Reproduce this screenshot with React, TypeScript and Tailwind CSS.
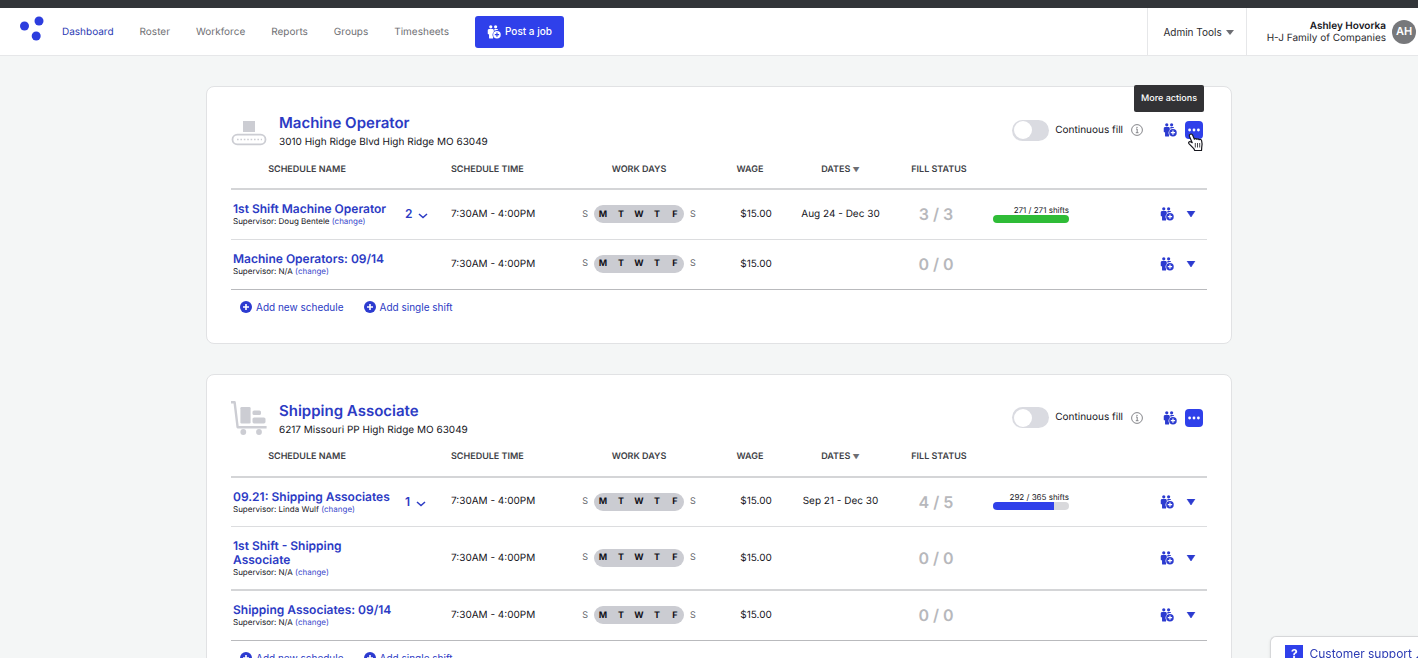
import React from "react";

type Schedule = {
  name: string;
  supervisor: string;
  count?: number;
  dates?: string;
  fill: string;
  progress?: { done: number; total: number };
  heavy?: boolean;
};

type Job = {
  id: string;
  title: string;
  address: string;
  icon: React.ReactNode;
  tooltip?: boolean;
  schedules: Schedule[];
};

const DAYS = ["M", "T", "W", "T", "F"];
const NAV = ["Dashboard", "Roster", "Workforce", "Reports", "Groups", "Timesheets"];

function PeopleIcon({ className, plus }: { className: string; plus: string }) {
  return (
    <svg viewBox="0 0 26 26" className={className} fill="currentColor" aria-hidden="true">
      <circle cx="7" cy="3.4" r="3" />
      <circle cx="16" cy="3.4" r="3" />
      <path d="M4.2 7.6h5.8c1.6 0 2.6 1 2.6 2.6v2.6c-1.6 1.4-2.4 3.2-2.4 5.4 0 1.6.4 3 1.2 4.2v1.2a1.6 1.6 0 0 1-1.6 1.6h-4.400a1.600 1.600 0 0 1-1.600-1.600v-6.400H3a1.600 1.600 0 0 1-1.600-1.600v-5.400c0-1.600 1.200-2.600 2.800-2.600z" />
      <path d="M14.200 7.600h4c1.400 0 2.300.8 2.500 2.100-2.600-.5-4.800 0-6.700 1.300 0-1.500 0-2.400-.6-3.300z" />
      <circle cx="18.500" cy="18" r="7" />
      <path d="M18.500 14v8M14.500 18h8" stroke={plus} strokeWidth="2.200" fill="none" />
    </svg>
  );
}

function ConveyorIcon() {
  return (
    <svg viewBox="0 -3 36 36" className="size-9 shrink-0" aria-hidden="true">
      <rect x="12" y="5" width="12" height="11" fill="#cccdd3" />
      <rect x="1.500" y="18.700" width="33" height="9.600" rx="4.800" fill="#fff" stroke="#cccdd3" strokeWidth="1.800" />
      <path d="M6 23.500h25" stroke="#cccdd3" strokeWidth="1.600" strokeDasharray="1.600 1.800" />
    </svg>
  );
}

function CartIcon() {
  return (
    <svg viewBox="0 2 36 36" className="size-9 shrink-0" fill="#cccdd3" aria-hidden="true">
      <path d="M0 3.200h3.600l3 25h29" fill="none" stroke="#cccdd3" strokeWidth="2.400" strokeLinejoin="round" />
      <rect x="9.400" y="8" width="10.200" height="16.400" rx="1.200" />
      <rect x="21.500" y="11.500" width="8.500" height="4.600" rx="1.600" />
      <rect x="21.500" y="18.400" width="13" height="6" rx="1.600" />
      <circle cx="12.300" cy="33" r="2.900" />
      <circle cx="28" cy="33" r="2.900" />
    </svg>
  );
}

function PlusCircle() {
  return (
    <svg viewBox="0 0 12 12" className="size-3" aria-hidden="true">
      <circle cx="6" cy="6" r="6" fill="#2c3bd0" />
      <path d="M6 3v6M3 6h6" stroke="#fff" strokeWidth="1.600" />
    </svg>
  );
}

function Pointer() {
  return (
    <svg viewBox="0 0 17 19" className="pointer-events-none absolute top-3 left-0.5 z-10 h-[19px] w-[17px]" aria-hidden="true">
      <path
        d="M3.300 1.200c1-.5 2 .1 2.400 1l1.700 4c.6-.8 1.900-.8 2.400.1.700-.7 1.900-.6 2.300.4 1-.6 2.200-.1 2.500 1 .6 2.300.8 4.700.1 7l-.2 2.800H7.700l-.9-1.900-4.900-5c-.8-1 .2-2.300 1.500-1.900l1.800 1L2.400 3.200c-.3-.8 0-1.600.9-2z"
        fill="#fff"
        stroke="#15151c"
        strokeWidth="1.200"
        strokeLinejoin="round"
      />
      <path d="M8.300 10v4.500M10.500 10v4.500M12.700 10v4.500" stroke="#15151c" strokeWidth=".8" />
    </svg>
  );
}

const JOBS: Job[] = [
  {
    id: "machine-operator",
    title: "Machine Operator",
    address: "3010 High Ridge Blvd High Ridge MO 63049",
    icon: <ConveyorIcon />,
    tooltip: true,
    schedules: [
      { name: "1st Shift Machine Operator", supervisor: "Doug Bentele", count: 2, dates: "Aug 24 - Dec 30", fill: "3 / 3", progress: { done: 271, total: 271 } },
      { name: "Machine Operators: 09/14", supervisor: "N/A", fill: "0 / 0" },
    ],
  },
  {
    id: "shipping-associate",
    title: "Shipping Associate",
    address: "6217 Missouri PP High Ridge MO 63049",
    icon: <CartIcon />,
    schedules: [
      { name: "09.21: Shipping Associates", supervisor: "Linda Wulf", count: 1, dates: "Sep 21 - Dec 30", fill: "4 / 5", progress: { done: 292, total: 365 } },
      { name: "1st Shift - Shipping Associate", supervisor: "N/A", fill: "0 / 0", heavy: true },
      { name: "Shipping Associates: 09/14", supervisor: "N/A", fill: "0 / 0" },
    ],
  },
];

function Progress({ done, total }: { done: number; total: number }) {
  const complete = done >= total;
  return (
    <div className="ml-[13px] w-[76px]">
      <div className="text-right text-[8px] leading-[9px] whitespace-nowrap text-[#15151c]">
        {done} / {total} shifts
      </div>
      <div className="h-2 overflow-hidden rounded-full bg-[#d9d9dc]">
        <div className={complete ? "h-full bg-[#2fbc37]" : "h-full bg-[#2f40ea]"} style={{ width: `${(done / total) * 100}%` }} />
      </div>
    </div>
  );
}

function ScheduleRow({ s, last }: { s: Schedule; last: boolean }) {
  const border = s.heavy ? "border-b-2 border-[#d4d5d7]" : last ? "border-b border-[#b9babd]" : "border-b border-[#dcdddf]";
  return (
    <tr className={`h-[50px] ${border}`}>
      <td className="py-3 pl-0.5 text-left">
        <a href="#schedule" className="block text-[12px] leading-[14px] font-semibold text-[#2c3bc4]">
          {s.name}
        </a>
        <div className="text-[8px] leading-[10px] text-[#15151c]">
          Supervisor: {s.supervisor}{" "}
          <a href="#change" className="text-[#3a49cc]">
            (change)
          </a>
        </div>
      </td>
      <td className="pl-2.5">
        {s.count !== undefined && (
          <button type="button" className="flex items-center gap-1.5 text-[12px] font-semibold text-[#2c3bc4]">
            {s.count}
            <svg viewBox="0 0 10 6" className="mt-1 h-1.5 w-2.5" fill="none" aria-hidden="true">
              <path d="M1 1l4 3.600L9 1" stroke="currentColor" strokeWidth="1.500" />
            </svg>
          </button>
        )}
      </td>
      <td className="pl-0.5 whitespace-nowrap">7:30AM - 4:00PM</td>
      <td>
        <div className="flex items-center justify-center gap-1.5 text-[9px]">
          <span className="text-[#66676c]">S</span>
          <span className="flex h-[18px] w-[90px] items-center rounded-full bg-[#cbccd2] font-bold text-[#101018]">
            {DAYS.map((d, i) => (
              <span key={i} className="flex-1 text-center">
                {d}
              </span>
            ))}
          </span>
          <span className="text-[#66676c]">S</span>
        </div>
      </td>
      <td className="pl-3 text-center">$15.00</td>
      <td className="text-center whitespace-nowrap">{s.dates}</td>
      <td className="text-center text-base font-semibold text-[#b7b8bc]">{s.fill}</td>
      <td>{s.progress && <Progress {...s.progress} />}</td>
      <td>
        <div className="flex items-center justify-end gap-3 pr-[11px] text-[#2c3bd0]">
          <button type="button" aria-label="Add workers">
            <PeopleIcon className="size-3.5" plus="#fff" />
          </button>
          <button type="button" aria-label="Schedule options">
            <svg viewBox="0 0 10 6" className="h-1.5 w-2.5" fill="currentColor" aria-hidden="true">
              <path d="M1 0h8L5 6z" stroke="currentColor" strokeWidth=".6" />
            </svg>
          </button>
        </div>
      </td>
    </tr>
  );
}

function JobCard({ job }: { job: Job }) {
  return (
    <section className="rounded-lg border border-[#e1e2e4] bg-white px-6 pt-[26px] pb-7">
      <div className="flex justify-between">
        <div className="flex items-start gap-3">
          {job.icon}
          <div>
            <h2 className="text-[15px] leading-[19px] font-semibold text-[#2c3bc4]">{job.title}</h2>
            <p className="text-[10px] leading-[21px] text-[#15151c]">{job.address}</p>
          </div>
        </div>
        <div className="mt-[7px] mr-1 flex h-5 items-center">
          <label htmlFor={job.id} className="flex cursor-pointer items-center gap-1.5 text-[10px] text-[#15151c]">
            <input id={job.id} type="checkbox" className="peer sr-only" />
            <span className="flex h-[21px] w-[37px] items-center rounded-full bg-[#dadbe1] px-0.5 peer-checked:justify-end peer-checked:bg-[#2f40ea]">
              <span className="size-[18px] rounded-full bg-white" />
            </span>
            Continuous fill
          </label>
          <svg viewBox="0 0 12 12" className="ml-2 size-3" fill="none" stroke="#77787d" aria-hidden="true">
            <circle cx="6" cy="6" r="5.400" strokeWidth=".9" />
            <path d="M5 5h1.200v3.600M4.800 8.700h2.700" strokeWidth=".9" />
            <circle cx="6" cy="3.300" r=".4" fill="#77787d" strokeWidth=".5" />
          </svg>
          <button type="button" aria-label="Add workers" className="ml-5 text-[#2c3bd0]">
            <PeopleIcon className="size-3.5" plus="#fff" />
          </button>
          <div className="relative ml-2">
            <button type="button" aria-label="More actions" className="flex size-[18px] items-center justify-center rounded bg-[#2f40ea]">
              <svg viewBox="0 0 12 4" className="h-1 w-3" fill="#fff" aria-hidden="true">
                <circle cx="1.600" cy="2" r="1.400" />
                <circle cx="6" cy="2" r="1.400" />
                <circle cx="10.400" cy="2" r="1.400" />
              </svg>
            </button>
            {job.tooltip && (
              <>
                <Pointer />
                <div role="tooltip" className="absolute -right-px bottom-[27px] rounded-xs bg-[#323235] px-[7px] text-[9px] leading-[27px] font-medium whitespace-nowrap text-white">
                  More actions
                </div>
              </>
            )}
          </div>
        </div>
      </div>
      <table className="w-full table-fixed border-collapse text-[10px] text-[#15151c]">
        <colgroup>
          <col className="w-[164px]" />
          <col className="w-[54px]" />
          <col className="w-[118px]" />
          <col className="w-[144px]" />
          <col className="w-[78px]" />
          <col className="w-[103px]" />
          <col className="w-[88px]" />
          <col className="w-[103px]" />
          <col />
        </colgroup>
        <thead>
          <tr className="h-9 border-b-2 border-[#d4d5d7] text-[9px] text-[#3e3f46] uppercase [&>th]:pb-0.5 [&>th]:font-semibold">
            <th className="pr-3">Schedule name</th>
            <th />
            <th className="pl-0.5 text-left">Schedule time</th>
            <th>Work days</th>
            <th>Wage</th>
            <th>
              Dates <span className="text-[7px] text-[#6d6e73]">▼</span>
            </th>
            <th className="pl-1.5">Fill status</th>
            <th />
            <th />
          </tr>
        </thead>
        <tbody>
          {job.schedules.map((s, i) => (
            <ScheduleRow key={s.name} s={s} last={i === job.schedules.length - 1} />
          ))}
        </tbody>
      </table>
      <div className="mt-[9px] flex gap-5 pl-[9px] text-[10px] leading-4 text-[#2c3bc4]">
        {["Add new schedule", "Add single shift"].map((t) => (
          <button key={t} type="button" className="flex items-center gap-1">
            <PlusCircle />
            {t}
          </button>
        ))}
      </div>
    </section>
  );
}

export default function App() {
  return (
    <div className="flex h-screen flex-col overflow-hidden bg-[#f4f6f6] font-['Inter',sans-serif] text-[#15151c] [text-rendering:geometricPrecision]">
      <div className="h-2 shrink-0 bg-[#323539]" />
      <header className="flex h-12 shrink-0 items-stretch border-b border-[#e6e7e9] bg-white">
        <a href="#home" aria-label="Home" className="mt-2 ml-5">
          <svg viewBox="0 0 24 25" className="h-[25px] w-6" fill="#2c3dde" aria-hidden="true">
            <circle cx="4.500" cy="10" r="4.500" />
            <circle cx="19" cy="5" r="4.500" />
            <circle cx="16.200" cy="20" r="4.500" />
          </svg>
        </a>
        <nav className="ml-[18px] flex items-center gap-[26px] text-[10px]">
          {NAV.map((n, i) => (
            <a key={n} href={`#${n.toLowerCase()}`} className={i === 0 ? "pt-0.5 text-[#2c3bb4]" : "pt-0.5 text-[#6f7074]"}>
              {n}
            </a>
          ))}
          <button type="button" className="flex h-8 items-center gap-1 rounded-[3px] bg-[#2f40ea] px-3 font-medium text-white">
            <PeopleIcon className="size-3.5" plus="#2f40ea" />
            Post a job
          </button>
        </nav>
        <div className="ml-auto flex items-stretch text-[10px]">
          <button type="button" className="flex items-center gap-1 border-x border-[#e6e7e9] px-3 pt-0.5 pl-[15px] text-[#2b2b30]">
            Admin Tools
            <svg viewBox="0 0 8 5" className="h-[5px] w-2" fill="#6d6e73" aria-hidden="true">
              <path d="M0 0h8L4 5z" />
            </svg>
          </button>
          <div className="flex items-center gap-1.5 pr-0.5 pl-5">
            <div className="text-right leading-3">
              <div className="font-semibold">Ashley Hovorka</div>
              <div className="text-[#2b2b30]">H-J Family of Companies</div>
            </div>
            <div className="flex size-6 items-center justify-center rounded-full bg-[#77787b] text-[11px] font-semibold text-white">AH</div>
          </div>
        </div>
      </header>
      <main className="min-h-0 flex-1 overflow-y-auto pt-[30px] pl-5 [scrollbar-width:none]">
        <div className="mx-auto flex max-w-[1026px] flex-col gap-[30px] pb-10">
          {JOBS.map((j) => (
            <JobCard key={j.id} job={j} />
          ))}
        </div>
      </main>
      <button
        type="button"
        className="fixed right-0 -bottom-2 flex h-[30px] items-center rounded-tl-md border border-r-0 border-[#d6d7d9] bg-white pt-1.5 pl-3.5 text-[12px] text-[#2c3bb4] shadow"
      >
        <span className="mr-1.5 flex size-[18px] items-center justify-center bg-[#2f40ea] font-bold text-white">?</span>
        Customer support
        <svg viewBox="0 0 4 4" className="mt-2 ml-0.5 h-1 w-1" aria-hidden="true">
          <path d="M0 4l4-4v4z" fill="#2c3bb4" />
        </svg>
      </button>
    </div>
  );
}
